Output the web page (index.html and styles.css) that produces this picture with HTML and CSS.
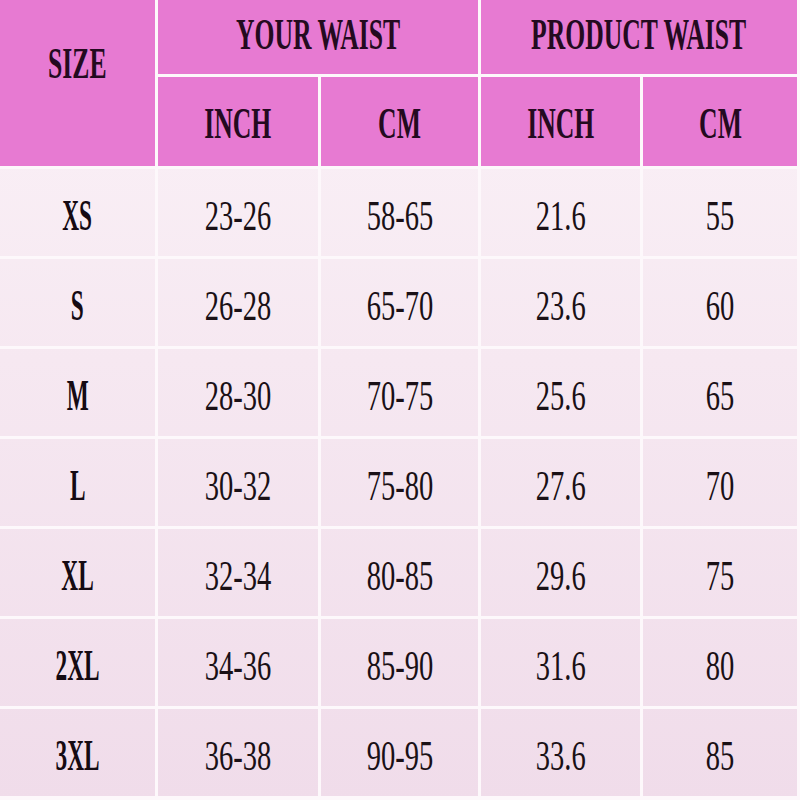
FILE: index.html
```html
<!DOCTYPE html>
<html>
<head>
<meta charset="utf-8">
<link rel="stylesheet" href="styles.css">
</head>
<body>
<div class="chart">
  <div class="hcell size-head"><span class="hb">SIZE</span></div>
  <div class="hcell group top"><span class="hb">YOUR WAIST</span></div>
  <div class="hcell group top"><span class="hb">PRODUCT WAIST</span></div>
  <div class="hcell sub"><span class="hb">INCH</span></div>
  <div class="hcell sub"><span class="hb">CM</span></div>
  <div class="hcell sub"><span class="hb">INCH</span></div>
  <div class="hcell sub"><span class="hb">CM</span></div>

  <div class="cell"><span class="sz">XS</span></div>
  <div class="cell"><span class="num">23-26</span></div>
  <div class="cell"><span class="num">58-65</span></div>
  <div class="cell"><span class="num">21.6</span></div>
  <div class="cell"><span class="num">55</span></div>

  <div class="cell"><span class="sz">S</span></div>
  <div class="cell"><span class="num">26-28</span></div>
  <div class="cell"><span class="num">65-70</span></div>
  <div class="cell"><span class="num">23.6</span></div>
  <div class="cell"><span class="num">60</span></div>

  <div class="cell"><span class="sz">M</span></div>
  <div class="cell"><span class="num">28-30</span></div>
  <div class="cell"><span class="num">70-75</span></div>
  <div class="cell"><span class="num">25.6</span></div>
  <div class="cell"><span class="num">65</span></div>

  <div class="cell"><span class="sz">L</span></div>
  <div class="cell"><span class="num">30-32</span></div>
  <div class="cell"><span class="num">75-80</span></div>
  <div class="cell"><span class="num">27.6</span></div>
  <div class="cell"><span class="num">70</span></div>

  <div class="cell"><span class="sz">XL</span></div>
  <div class="cell"><span class="num">32-34</span></div>
  <div class="cell"><span class="num">80-85</span></div>
  <div class="cell"><span class="num">29.6</span></div>
  <div class="cell"><span class="num">75</span></div>

  <div class="cell"><span class="sz">2XL</span></div>
  <div class="cell"><span class="num">34-36</span></div>
  <div class="cell"><span class="num">85-90</span></div>
  <div class="cell"><span class="num">31.6</span></div>
  <div class="cell"><span class="num">80</span></div>

  <div class="cell"><span class="sz">3XL</span></div>
  <div class="cell"><span class="num">36-38</span></div>
  <div class="cell"><span class="num">90-95</span></div>
  <div class="cell"><span class="num">33.6</span></div>
  <div class="cell"><span class="num">85</span></div>
</div>
</body>
</html>
```

FILE: styles.css
```css
html, body {
  margin: 0;
  padding: 0;
  background: #ffffff;
}

.chart {
  width: 800px;
  height: 800px;
  box-sizing: border-box;
  padding: 0 3px 5px 0;
  display: grid;
  grid-template-columns: 155px 160px 157px 159px 154px;
  grid-template-rows: 74px 89px repeat(7, 87px);
  gap: 3px;
  background: #fdf8fb;
  font-family: "Liberation Serif", "Times New Roman", serif;
  color: #1c0d1a;
}

.hcell {
  background: #e77ad2;
  display: flex;
  align-items: center;
  justify-content: center;
}

.size-head {
  grid-row: span 2;
  align-items: flex-start;
  padding-top: 41px;
}

.group {
  grid-column: span 2;
  padding-bottom: 6px;
}

.sub {
  padding-top: 4px;
}

.cell {
  background: linear-gradient(to bottom, #fbf3f8 0%, #f6e8f1 45%, #f0dcea 100%) fixed;
  display: flex;
  align-items: center;
  justify-content: center;
  padding-top: 6px;
}

.hb {
  display: inline-block;
  font-weight: bold;
  font-size: 45px;
  line-height: 1;
  transform: scaleX(0.57);
  white-space: nowrap;
  color: #240a20;
}

.sz {
  display: inline-block;
  font-weight: bold;
  font-size: 44px;
  line-height: 1;
  transform: scaleX(0.53);
  color: #150a12;
}

.num {
  display: inline-block;
  font-size: 42px;
  line-height: 1;
  transform: scaleX(0.68);
  color: #1a1016;
}
```
